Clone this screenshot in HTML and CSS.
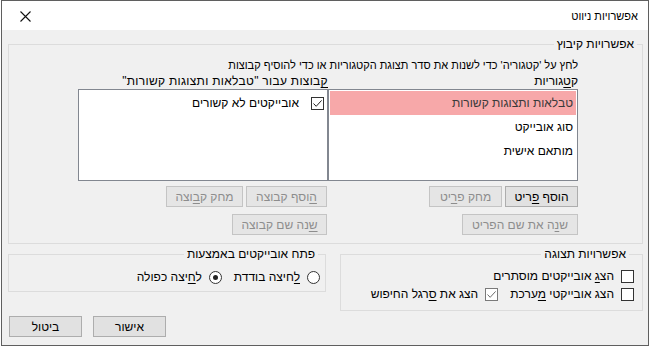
FILE: index.html
```html
<!DOCTYPE html>
<html dir="rtl" lang="he">
<head>
    <title>אפשרויות ניווט</title>
    <link rel="stylesheet" href="styles.css">
</head>
<body>
    <div class="window">
        <div class="titlebar">
            <span class="title">אפשרויות ניווט</span>
            <svg class="close" width="11" height="11" viewBox="0 0 11 11">
                <path d="M0.5 0.5 L10.5 10.5 M10.5 0.5 L0.5 10.5" stroke="#111" stroke-width="1.1" fill="none"/>
            </svg>
        </div>
        <div class="content">
            <fieldset class="group grouping">
                <legend>אפשרויות קיבוץ</legend>
                <div class="grouping-body">
                    <div class="hint">לחץ על 'קטגוריה' כדי לשנות את סדר תצוגת הקטגוריות או כדי להוסיף קבוצות</div>
                    <div class="lists">
                        <div class="col col-cats">
                            <div class="list-label">ק<u>ט</u>גוריות</div>
                            <div class="listbox">
                                <div class="item selected">טבלאות ותצוגות קשורות</div>
                                <div class="item">סוג אובייקט</div>
                                <div class="item">מותאם אישית</div>
                            </div>
                            <div class="btn-row">
                                <button class="btn w73">הוסף <u>פ</u>ריט</button>
                                <button class="btn w72" disabled>מחק פ<u>ר</u>יט</button>
                            </div>
                            <div class="btn-row">
                                <button class="btn w115" disabled>ש<u>נ</u>ה את שם הפריט</button>
                            </div>
                        </div>
                        <div class="col col-groups">
                            <div class="list-label wide"><u>ק</u>בוצות עבור "טבלאות ותצוגות קשורות"</div>
                            <div class="listbox">
                                <div class="item check-item">
                                    <span class="checkbox">
                                        <svg width="11" height="11" viewBox="0 0 11 11"><path d="M1.5 5.5 L4.2 8.3 L9.6 2.4" stroke="#222" stroke-width="1" fill="none"/></svg>
                                    </span>
                                    <span>אובייקטים לא קשורים</span>
                                </div>
                            </div>
                            <div class="btn-row inset">
                                <button class="btn w80" disabled><u>ה</u>וסף קבוצה</button>
                                <button class="btn w76" disabled>מחק ק<u>ב</u>וצה</button>
                            </div>
                            <div class="btn-row inset">
                                <button class="btn w94" disabled><u>ש</u>נה שם קבוצה</button>
                            </div>
                        </div>
                    </div>
                </div>
            </fieldset>

            <div class="lower">
                <fieldset class="group display">
                    <legend>אפשרויות תצוגה</legend>
                    <div class="opt-row">
                        <label class="opt"><span class="checkbox"></span><span>הצ<u>ג</u> אובייקטים מוסתרים</span></label>
                    </div>
                    <div class="opt-row">
                        <label class="opt"><span class="checkbox"></span><span>הצג אובייקטי <u>מ</u>ערכת</span></label>
                        <label class="opt"><span class="checkbox dim">
                            <svg width="11" height="11" viewBox="0 0 11 11"><path d="M1.5 5.5 L4.2 8.3 L9.6 2.4" stroke="#6d6d6d" stroke-width="1" fill="none"/></svg>
                        </span><span>הצג את <u>ס</u>רגל החיפוש</span></label>
                    </div>
                </fieldset>
                <fieldset class="group open-with">
                    <legend>פתח אובייקטים באמצעות</legend>
                    <div class="opt-row">
                        <label class="opt"><span class="radio"></span><span><u>ל</u>חיצה בודדת</span></label>
                        <label class="opt"><span class="radio on"></span><span>ל<u>ח</u>יצה כפולה</span></label>
                    </div>
                </fieldset>
            </div>

            <div class="footer">
                <button class="btn w73">אישור</button>
                <button class="btn w73">ביטול</button>
            </div>
        </div>
    </div>
</body>
</html>
```

FILE: styles.css
```css
/* Navigation options dialog */
html, body {
    margin: 0;
    padding: 0;
}
body {
    font-family: "Liberation Sans", "DejaVu Sans", sans-serif;
    font-size: 12px;
    color: #000;
    background: #ffffff;
}
.window {
    width: 648px;
    height: 346px;
    box-sizing: border-box;
    border: 1px solid #5f5f5f;
    background-color: #f0f0f0;
}
.titlebar {
    height: 29px;
    background-color: #fff;
    display: flex;
    align-items: center;
    justify-content: space-between;
    padding: 0 10px 0 18px;
    font-size: 11px;
}
.title {
    padding-top: 1px;
}
.close {
    display: block;
    margin-top: 1px;
}
.content {
    padding: 0 5px 0 6px;
}
u {
    text-decoration-thickness: 1px;
    text-underline-offset: 2px;
}

/* group boxes */
.group {
    margin: 0;
    padding: 0;
    border: 1px solid #dcdcdc;
    min-width: 0;
}
.group legend {
    padding: 0 3px;
    margin-right: 5px;
    line-height: 15px;
}
.grouping {
    margin-top: 7px;
}
.grouping-body {
    padding: 0 64px 8px 0;
}
.hint {
    width: 500px;
    line-height: 15px;
    margin-top: 6px;
    font-size: 11px;
}
.lists {
    display: grid;
    grid-template-columns: 250px 250px;
    width: 500px;
}
.list-label {
    line-height: 15px;
    margin-top: 1px;
    height: 15px;
    white-space: nowrap;
}
.list-label.wide {
    letter-spacing: 0.3px;
}
.listbox {
    height: 92px;
    box-sizing: border-box;
    border: 1px solid #828790;
    background-color: #fff;
    padding: 1px;
}
.item {
    height: 24px;
    line-height: 24px;
    padding-right: 3px;
}
.item.selected {
    background-color: #f7a8a9;
    color: #3a3a3a;
}
.check-item {
    display: flex;
    align-items: center;
    gap: 12px;
    padding-right: 2px;
}

/* buttons */
.btn-row {
    display: flex;
    gap: 3px;
    margin-top: 5px;
}
.btn-row + .btn-row {
    margin-top: 7px;
}
.btn-row.inset {
    padding-right: 1px;
}
.btn {
    height: 21px;
    box-sizing: border-box;
    padding: 0;
    font: inherit;
    color: #000;
    background-color: #e1e1e1;
    border: 1px solid #adadad;
    border-radius: 0;
}
.btn:disabled {
    color: #8d8d8d;
    background-color: #e5e5e5;
    border-color: #c4c4c4;
}
.w72 { width: 73px; }
.w73 { width: 73px; }
.w76 { width: 77px; }
.w80 { width: 81px; }
.w94 { width: 95px; }
.w115 { width: 116px; }

/* checkboxes and radios */
.checkbox {
    width: 13px;
    height: 13px;
    box-sizing: border-box;
    border: 1px solid #333;
    background-color: #fff;
    display: inline-flex;
    align-items: center;
    justify-content: center;
    flex: none;
}
.checkbox.dim {
    border-color: #7a7a7a;
}
.radio {
    width: 13px;
    height: 13px;
    box-sizing: border-box;
    border: 1px solid #333;
    border-radius: 50%;
    background-color: #fff;
    display: inline-flex;
    align-items: center;
    justify-content: center;
    flex: none;
}
.radio.on::after {
    content: "";
    width: 5px;
    height: 5px;
    border-radius: 50%;
    background-color: #222;
}

.lower {
    display: flex;
    align-items: flex-start;
    gap: 14px;
    margin-top: 3px;
}
.display {
    width: 303px;
    box-sizing: border-box;
    padding: 5px 8px 7px 0;
}
.open-with {
    flex: 1;
    padding: 6px 5px 5px 0;
}
.open-with legend {
    margin-right: 2px;
}
.opt-row {
    display: flex;
    gap: 12px;
    height: 18px;
    align-items: center;
}
.opt {
    display: flex;
    align-items: center;
    gap: 7px;
}
.open-with .opt {
    gap: 7px;
}
.open-with .opt-row {
    gap: 12px;
}

.footer {
    display: flex;
    justify-content: flex-end;
    gap: 11px;
    margin-top: 5px;
    padding-left: 1px;
}
```
